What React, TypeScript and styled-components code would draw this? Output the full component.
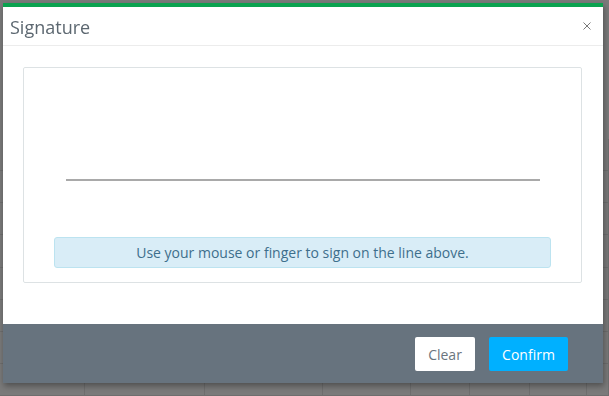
import React from "react";
import styled, { createGlobalStyle } from "styled-components";

const Global = createGlobalStyle`
  html, body { margin: 0; padding: 0; }
  body {
    width: 609px;
    height: 396px;
    overflow: hidden;
    background: #7a7a7a;
    font-family: "Open Sans", "Noto Sans", sans-serif;
  }
`;

const Page = styled.div`
  width: 609px;
  height: 396px;
  display: flex;
  flex-direction: column;
  padding-top: 139px;
  box-sizing: border-box;
`;

const BgRow = styled.div`
  height: 33px;
  border-bottom: 1px solid #6e6e6e;
  box-sizing: border-box;
  display: grid;
  grid-template-columns: 85px 120px 118px 88px 59px 60px 57px 22px;
`;

const BgCell = styled.div`
  border-right: 1px solid #6e6e6e;
`;

const Overlay = styled.div`
  position: fixed;
  inset: 0;
  padding: 3px 0 0 3px;
`;

const Modal = styled.div`
  width: 600px;
  height: 380px;
  background: #fff;
  border-top: 4px solid #0aa24f;
  box-sizing: border-box;
  display: flex;
  flex-direction: column;
  box-shadow: 1px 3px 6px rgba(0, 0, 0, 0.35);
`;

const Header = styled.div`
  height: 39px;
  border-bottom: 1px solid #ececec;
  display: flex;
  align-items: center;
  justify-content: space-between;
  padding: 0 11px 0 7px;
  box-sizing: border-box;
`;

const Title = styled.h4`
  margin: 0;
  font-size: 18px;
  font-weight: 400;
  color: #5c6770;
  line-height: 24px;
  padding-top: 2px;
`;

const Close = styled.button`
  border: none;
  background: none;
  padding: 0;
  width: 10px;
  height: 10px;
  display: flex;
  cursor: pointer;
  margin-top: 0px;
`;

const Body = styled.div`
  flex: 1;
  padding: 21px 21px 41px 20px;
  display: flex;
`;

const Pad = styled.div`
  flex: 1;
  border: 1px solid #dde2e4;
  border-radius: 2px;
  padding: 0 30px 14px 30px;
  display: flex;
  flex-direction: column;
`;

const LineArea = styled.div`
  flex: 1;
  padding: 111px 11px 0 12px;
`;

const SignLine = styled.div`
  height: 2px;
  background: #a9a9a9;
`;

const Alert = styled.div`
  height: 31px;
  background: #d9edf7;
  border: 1px solid #bce3f0;
  border-radius: 3px;
  box-sizing: border-box;
  color: #3e6f8c;
  font-size: 14px;
  display: flex;
  align-items: center;
  justify-content: center;
  padding-top: 0px;
`;

const Footer = styled.div`
  height: 59px;
  background: #67737e;
  display: flex;
  justify-content: flex-end;
  align-items: flex-start;
  gap: 14px;
  padding: 13px 35px 0 0;
  box-sizing: border-box;
`;

const Button = styled.button<{ $primary?: boolean }>`
  height: 34px;
  width: ${(p) => (p.$primary ? "79px" : "60px")};
  border: none;
  border-radius: 2px;
  font-family: "Open Sans", "Noto Sans", sans-serif;
  font-size: 14px;
  background: ${(p) => (p.$primary ? "#00b0ff" : "#ffffff")};
  color: ${(p) => (p.$primary ? "#ffffff" : "#6a757e")};
  padding: 0;
  cursor: pointer;
`;

const cols = Array.from({ length: 8 });

export default function App() {
  return (
    <>
      <Global />
      <Page>
        {Array.from({ length: 8 }).map((_, r) => (
          <BgRow key={r}>
            {cols.map((__, c) => (
              <BgCell key={c} />
            ))}
          </BgRow>
        ))}
      </Page>
      <Overlay>
        <Modal>
          <Header>
            <Title>Signature</Title>
            <Close aria-label="Close">
              <svg width="10" height="10" viewBox="0 0 10 10">
                <path d="M1.5 1.5 L8.5 8.5 M8.5 1.5 L1.5 8.5" stroke="#6a6a6a" strokeWidth="0.9" />
              </svg>
            </Close>
          </Header>
          <Body>
            <Pad>
              <LineArea>
                <SignLine />
              </LineArea>
              <Alert>Use your mouse or finger to sign on the line above.</Alert>
            </Pad>
          </Body>
          <Footer>
            <Button>Clear</Button>
            <Button $primary>Confirm</Button>
          </Footer>
        </Modal>
      </Overlay>
    </>
  );
}
